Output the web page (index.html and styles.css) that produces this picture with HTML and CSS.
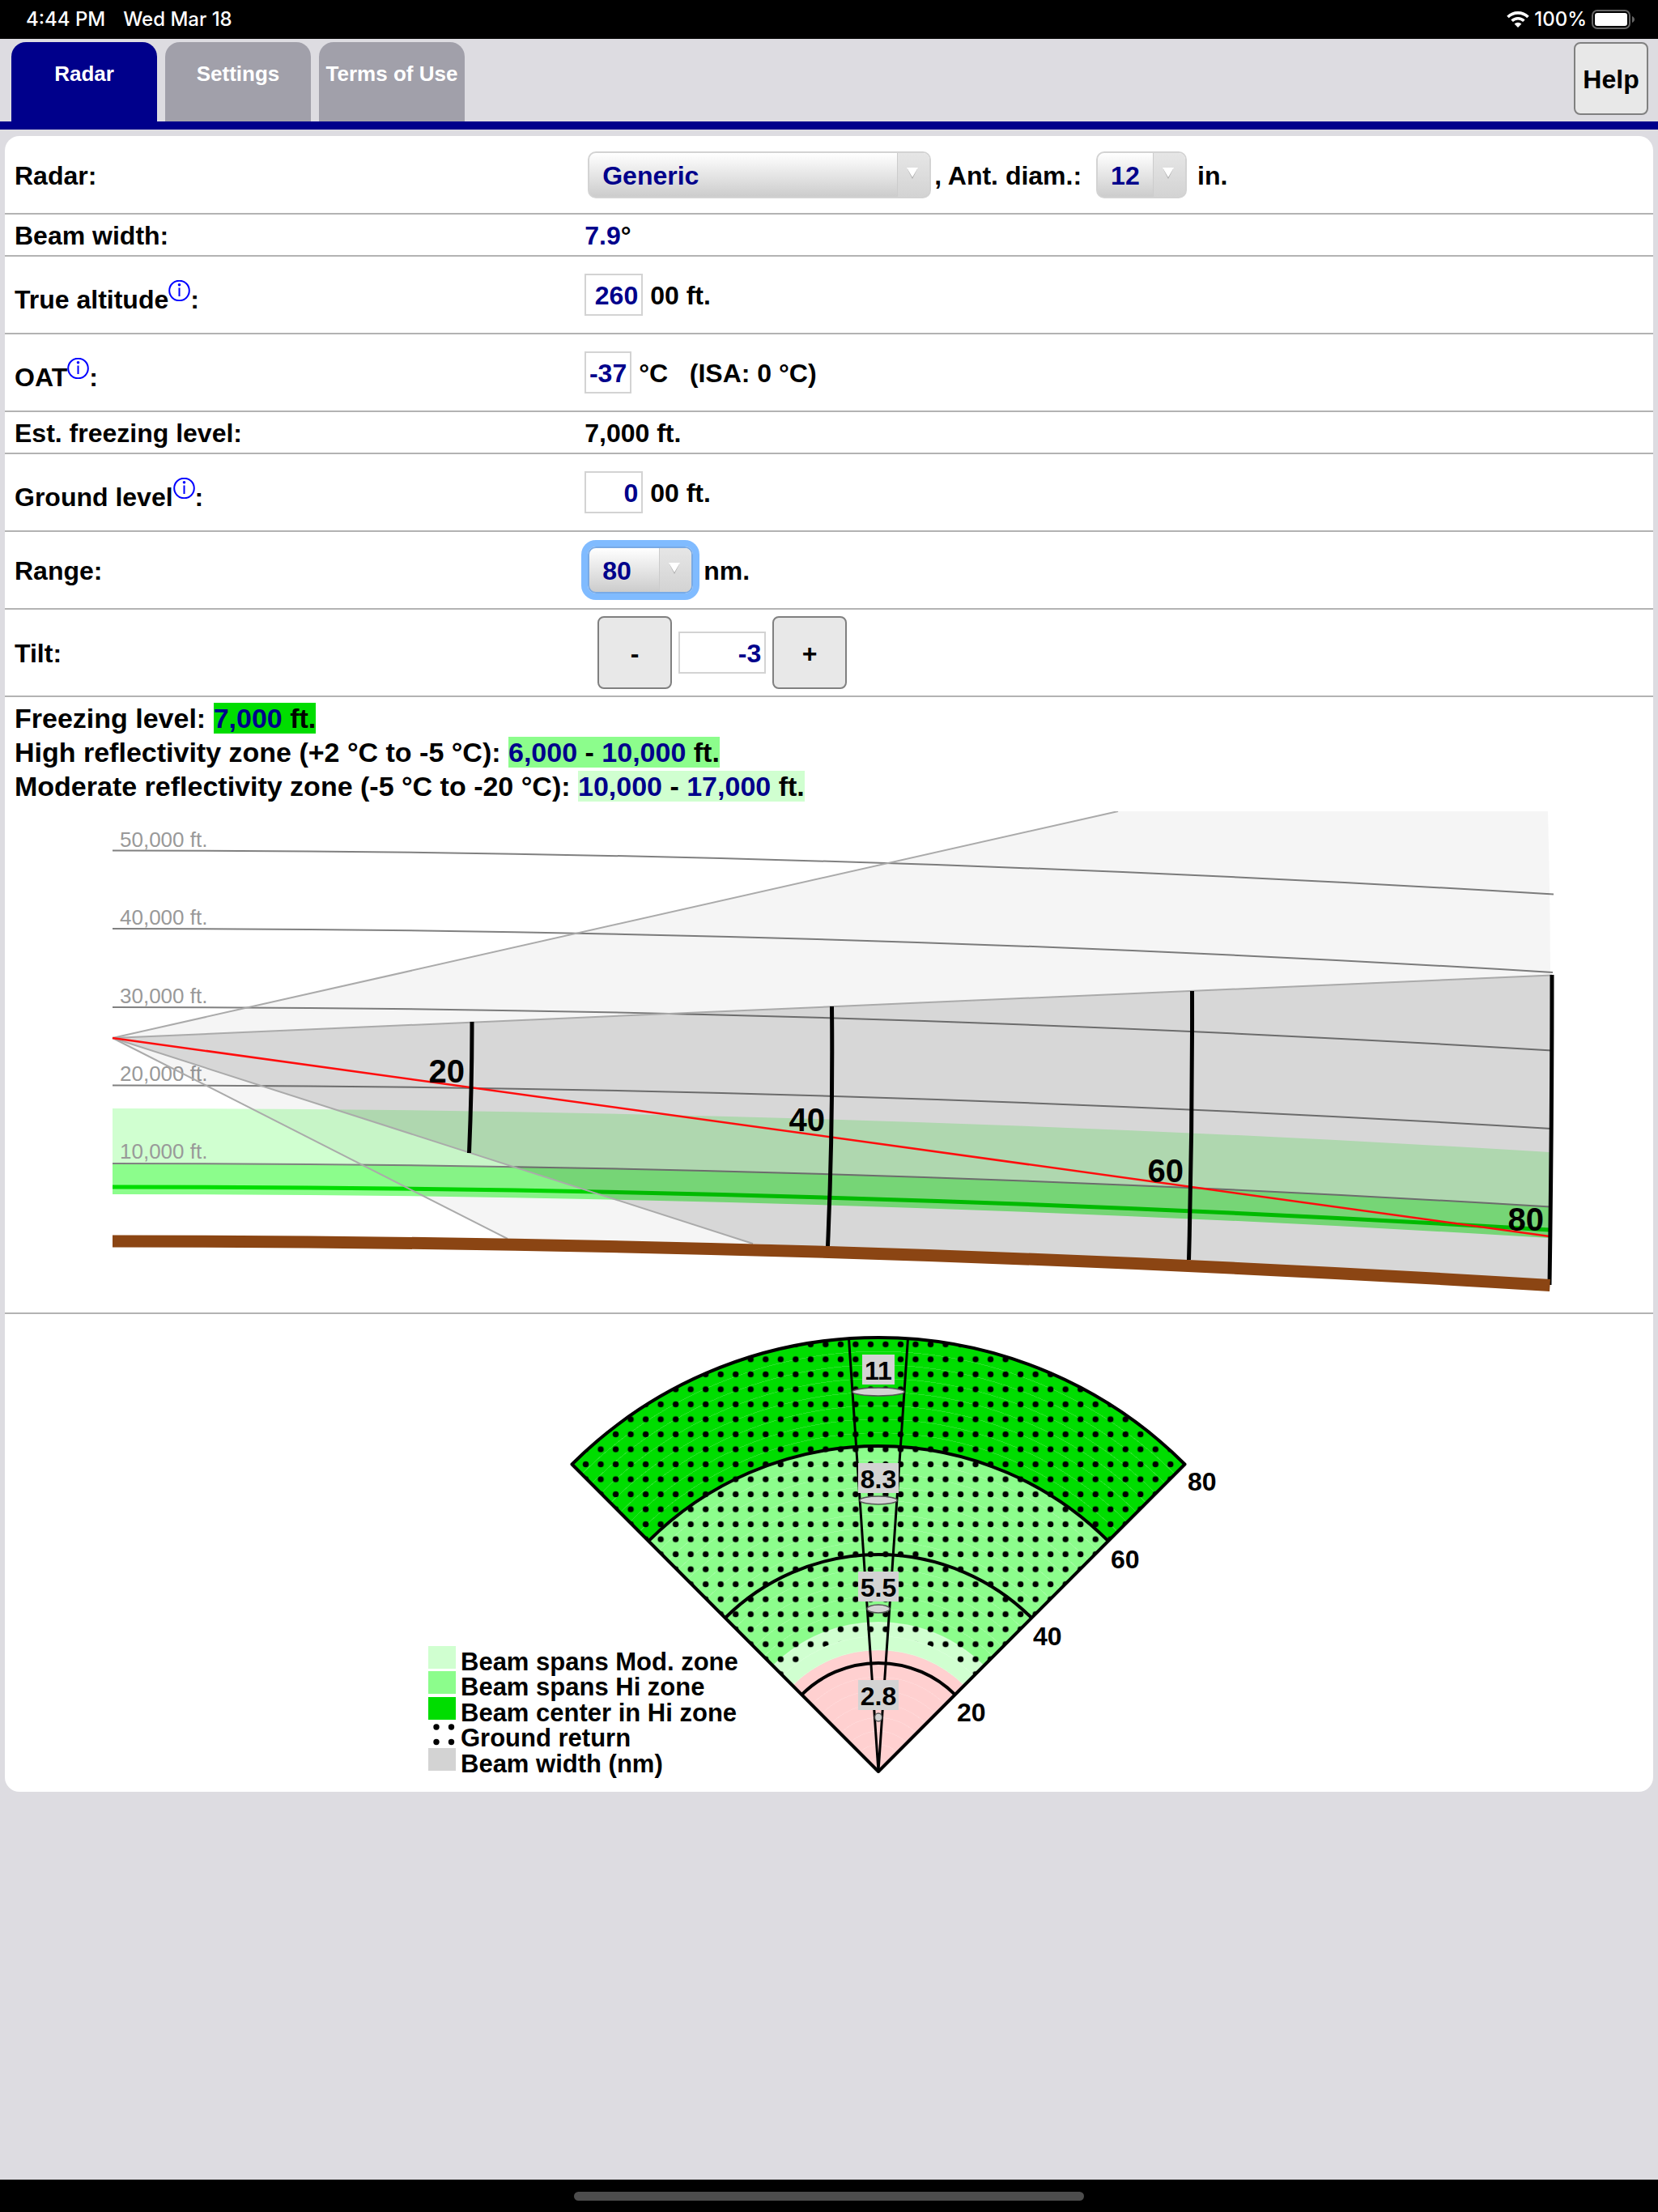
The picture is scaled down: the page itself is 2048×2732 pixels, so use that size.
FILE: index.html
```html
<!DOCTYPE html>
<html lang="en">
<head>
<meta charset="utf-8">
<meta name="viewport" content="width=device-width, initial-scale=1">
<title>Radar</title>
<link rel="stylesheet" href="styles.css">
</head>
<body>
<div class="statusbar">
  <span class="status-text">4:44 PM</span>
  <span class="status-text">Wed Mar 18</span>
  <span class="status-icons">
    <svg class="wifi" viewBox="0 0 28 20" aria-hidden="true">
      <path d="M14 20 L9.600 15.600 A6.200 6.200 0 0 1 18.400 15.600 Z" fill="#fff"/>
      <path d="M6.600 11.800 A10.500 10.500 0 0 1 21.400 11.800" fill="none" stroke="#fff" stroke-width="3.600"/>
      <path d="M1.500 7 A17.800 17.800 0 0 1 26.500 7" fill="none" stroke="#fff" stroke-width="3.600"/>
    </svg>
    <span class="status-text">100%</span>
    <svg class="battery" viewBox="0 0 54 24" aria-hidden="true">
      <rect x="1" y="1" width="46" height="22" rx="6" fill="none" stroke="#666" stroke-width="2"/>
      <rect x="4" y="4" width="40" height="16" rx="3" fill="#fff"/>
      <path d="M50 8 C54 9.500 54 14.500 50 16 Z" fill="#666"/>
    </svg>
  </span>
</div>

<header class="topbar">
  <nav class="tabs">
    <a class="tab tab-active" href="#radar">Radar</a>
    <a class="tab" href="#settings">Settings</a>
    <a class="tab" href="#terms">Terms of Use</a>
  </nav>
  <button class="btn" type="button">Help</button>
</header>

<main class="panel" id="radar">
  <form>
    <div class="row">
      <label for="model">Radar:</label>
      <div class="value">
        <span class="pick pick-wide">
          <select id="model"><option>Generic</option></select>
          <span class="arrow"><svg viewBox="0 0 14 14" aria-hidden="true"><path d="M1 2 L7 14 L13 2 Z" fill="#aaa"/><path d="M0 0 H14 L7 12 Z" fill="#fff"/></svg></span>
        </span>
        <label for="diam">, Ant. diam.:</label>
        <span class="pick pick-small pick-next">
          <select id="diam"><option>12</option></select>
          <span class="arrow"><svg viewBox="0 0 14 14" aria-hidden="true"><path d="M1 2 L7 14 L13 2 Z" fill="#aaa"/><path d="M0 0 H14 L7 12 Z" fill="#fff"/></svg></span>
        </span>
        <span class="unit">in.</span>
      </div>
    </div>
    <div class="row row-text">
      <span>Beam width:</span>
      <div class="value"><b class="num">7.9</b>°</div>
    </div>
    <div class="row row-mid">
      <span class="with-info"><label for="alt">True altitude</label><a class="info" href="#altitude-info" aria-label="About true altitude"><svg viewBox="0 0 27 26"><circle cx="13.500" cy="13" r="12.300"/><path d="M13.500 9.500 V20"/><circle class="dot" cx="13.500" cy="5.800" r="1.800"/></svg></a>:</span>
      <div class="value"><input class="field field-3" id="alt" type="text" value="260"><span class="unit">00 ft.</span></div>
    </div>
    <div class="row row-mid">
      <span class="with-info"><label for="oat">OAT</label><a class="info" href="#oat-info" aria-label="About OAT"><svg viewBox="0 0 27 26"><circle cx="13.500" cy="13" r="12.300"/><path d="M13.500 9.500 V20"/><circle class="dot" cx="13.500" cy="5.800" r="1.800"/></svg></a>:</span>
      <div class="value"><input class="field field-2" id="oat" type="text" value="-37"><span class="unit">°C &nbsp; (ISA: 0 °C)</span></div>
    </div>
    <div class="row row-text">
      <span>Est. freezing level:</span>
      <div class="value">7,000 ft.</div>
    </div>
    <div class="row row-mid">
      <span class="with-info"><label for="ground">Ground level</label><a class="info" href="#ground-info" aria-label="About ground level"><svg viewBox="0 0 27 26"><circle cx="13.500" cy="13" r="12.300"/><path d="M13.500 9.500 V20"/><circle class="dot" cx="13.500" cy="5.800" r="1.800"/></svg></a>:</span>
      <div class="value"><input class="field field-3" id="ground" type="text" value="0"><span class="unit">00 ft.</span></div>
    </div>
    <div class="row row-mid">
      <label for="range">Range:</label>
      <div class="value">
        <span class="pick pick-range">
          <select id="range"><option>80</option></select>
          <span class="arrow"><svg viewBox="0 0 14 14" aria-hidden="true"><path d="M1 2 L7 14 L13 2 Z" fill="#aaa"/><path d="M0 0 H14 L7 12 Z" fill="#fff"/></svg></span>
        </span>
        <span class="unit">nm.</span>
      </div>
    </div>
    <div class="row">
      <label for="tilt">Tilt:</label>
      <div class="value stepper">
        <button class="btn" type="button">-</button>
        <input class="field field-tilt" id="tilt" type="text" value="-3">
        <button class="btn" type="button">+</button>
      </div>
    </div>
  </form>

  <section class="profile">
    <p>Freezing level: <span class="hl hl-center"><b class="num">7,000</b> ft.</span></p>
    <p>High reflectivity zone (+2 °C to -5 °C): <span class="hl hl-high"><b class="num">6,000</b> - <b class="num">10,000</b> ft.</span></p>
    <p>Moderate reflectivity zone (-5 °C to -20 °C): <span class="hl hl-mod"><b class="num">10,000</b> - <b class="num">17,000</b> ft.</span></p>
    <svg class="chart" viewBox="6 1002 2036 619" role="img" aria-label="Beam side view">
      <!-- reflectivity zones -->
      <path fill="#d0ffd0" d="M139 1369 Q1027 1369 1914 1423 V1490 Q1027 1437 139 1437 Z"/>
      <path fill="#8cfd8c" d="M139 1437 Q1027 1437 1914 1490 V1529 Q1027 1475 139 1475 Z"/>
      <path fill="none" stroke="#00dd00" stroke-width="5" d="M139 1466 Q1027 1466 1914 1519"/>
      <!-- altitude lines -->
      <g fill="none" stroke="#808080" stroke-width="2">
        <path d="M139 1050.500 Q1028 1050.500 1919 1104.500"/>
        <path d="M139 1147 Q1028 1147 1918 1201"/>
        <path d="M139 1244 Q1028 1244 1917 1297.500"/>
        <path d="M139 1340.500 Q1028 1340.500 1916 1394"/>
        <path d="M139 1437 Q1028 1437 1915 1490.500"/>
      </g>
      <g class="alt-labels">
        <text x="148" y="1046">50,000 ft.</text>
        <text x="148" y="1142">40,000 ft.</text>
        <text x="148" y="1239">30,000 ft.</text>
        <text x="148" y="1335">20,000 ft.</text>
        <text x="148" y="1431">10,000 ft.</text>
      </g>
      <!-- side lobes, then the main beam -->
      <path fill="#000" fill-opacity=".04" d="M139 1282 L1381 1002 H1912 Q1915 1120 1915 1204 Z"/>
      <path fill="#000" fill-opacity=".04" d="M139 1282 L930 1536 L627 1530 Z"/>
      <path fill="#000" fill-opacity=".158" d="M139 1282 L1917 1204 L1914 1587 L930 1536 Z"/>
      <g fill="none" stroke="#aaa" stroke-width="2">
        <path d="M139 1282 L1381 1002"/>
        <path d="M139 1282 L1917 1204.500"/>
        <path d="M139 1282 L930 1536"/>
        <path d="M139 1282 L627 1530"/>
      </g>
      <path fill="none" stroke="#ff0d0d" stroke-width="2.500" d="M139 1282 L1914 1527"/>
      <!-- range marks -->
      <g fill="none" stroke="#000" stroke-width="5">
        <path d="M583 1262 Q583 1340 579.500 1424"/>
        <path d="M1027.500 1243 Q1029 1390 1022.500 1539"/>
        <path d="M1472.500 1224 Q1473 1390 1468.500 1556"/>
        <path d="M1917 1204 Q1917 1390 1914 1587"/>
      </g>
      <path fill="none" stroke="#8b4513" stroke-width="15" d="M139 1533 Q1027 1533 1914.500 1587.500"/>
      <g class="range-labels">
        <text x="574" y="1337">20</text>
        <text x="1019" y="1397">40</text>
        <text x="1462" y="1460">60</text>
        <text x="1907" y="1520">80</text>
      </g>
    </svg>
  </section>

  <section>
    <svg class="chart" viewBox="6 1623 2036 590" role="img" aria-label="Radar sweep">
      <defs>
        <pattern id="dots" patternUnits="userSpaceOnUse" x="1066.150" y="1651.100" width="18.520" height="18.520">
          <circle cx="9.260" cy="9.260" r="3.700"/>
        </pattern>
        <radialGradient id="rings" gradientUnits="userSpaceOnUse" cx="1085" cy="2188" r="16.750" spreadMethod="repeat">
          <stop offset=".94" stop-color="#fff" stop-opacity="0"/>
          <stop offset=".95" stop-color="#fff" stop-opacity=".18"/>
        </radialGradient>
      </defs>
      <path fill="#00dd00" d="M1085 2188 L706 1809 A536 536 0 0 1 1464 1809 Z"/>
      <path fill="#8cfd8c" d="M1085 2188 L800.700 1903.700 A402 402 0 0 1 1369.300 1903.700 Z"/>
      <path fill="#d0ffd0" d="M1085 2188 L954.200 2057.200 A185 185 0 0 1 1215.800 2057.200 Z"/>
      <path fill="#ffd0d0" d="M1085 2188 L979 2082 A150 150 0 0 1 1191 2082 Z"/>
      <path fill="url(#rings)" d="M1085 2188 L706 1809 A536 536 0 0 1 1464 1809 Z"/>
      <path fill="url(#dots)" d="M706 1809 A536 536 0 0 1 1464 1809 L1203.800 2069.200 A168 168 0 0 0 966.200 2069.200 Z"/>
      <g fill="none" stroke="#000" stroke-width="4" stroke-linejoin="round">
        <path d="M1085 2188 L706.500 1808.500 A536 536 0 0 1 1463.500 1808.500 Z"/>
        <path d="M800.700 1903.700 A402 402 0 0 1 1369.300 1903.700"/>
        <path d="M895.500 1998.500 A268 268 0 0 1 1274.500 1998.500"/>
        <path d="M990.200 2093.200 A134 134 0 0 1 1179.800 2093.200"/>
        <path stroke-width="3" d="M1048.500 1653 L1085 2188 L1121.500 1653"/>
      </g>
      <g fill="#d3d3d3" stroke="#555" stroke-width="1.500">
        <ellipse cx="1085" cy="1719" rx="32" ry="5"/>
        <ellipse cx="1085" cy="1853" rx="23" ry="5"/>
        <ellipse cx="1085" cy="1987" rx="14" ry="5"/>
        <ellipse cx="1085" cy="2121" rx="4.500" ry="5"/>
      </g>
      <g fill="#d3d3d3">
        <rect x="1065" y="1673" width="40" height="37"/>
        <rect x="1060" y="1807" width="50" height="37"/>
        <rect x="1060" y="1941" width="50" height="37"/>
        <rect x="1060" y="2075" width="50" height="37"/>
      </g>
      <g class="beam-labels">
        <text x="1085" y="1704">11</text>
        <text x="1085" y="1838">8.3</text>
        <text x="1085" y="1972">5.5</text>
        <text x="1085" y="2106">2.8</text>
      </g>
      <g>
        <text x="1467" y="1841">80</text>
        <text x="1372" y="1937">60</text>
        <text x="1276" y="2032">40</text>
        <text x="1182" y="2126">20</text>
      </g>
      <!-- legend -->
      <rect x="529" y="2033" width="34" height="28" fill="#d0ffd0"/>
      <rect x="529" y="2064" width="34" height="28" fill="#8cfd8c"/>
      <rect x="529" y="2096" width="34" height="28" fill="#00dd00"/>
      <g>
        <circle cx="539" cy="2133" r="3.700"/><circle cx="557.500" cy="2133" r="3.700"/>
        <circle cx="539" cy="2151.500" r="3.700"/><circle cx="557.500" cy="2151.500" r="3.700"/>
      </g>
      <rect x="529" y="2159" width="34" height="28" fill="#d3d3d3"/>
      <g class="legend">
        <text x="569" y="2063">Beam spans Mod. zone</text>
        <text x="569" y="2094">Beam spans Hi zone</text>
        <text x="569" y="2126">Beam center in Hi zone</text>
        <text x="569" y="2157">Ground return</text>
        <text x="569" y="2189">Beam width (nm)</text>
      </g>
    </svg>
  </section>
</main>

<footer class="homebar"><span class="home-indicator"></span></footer>
</body>
</html>
```
FILE: styles.css
```css
* {
  box-sizing: border-box;
}

body {
  margin: 0;
  min-height: 100vh;
  display: flex;
  flex-direction: column;
  background: #dddce1;
  color: #000;
  font: bold 32px/36px "Liberation Sans", Arial, sans-serif;
}

/* status bar */
.statusbar {
  display: flex;
  align-items: center;
  gap: 22px;
  height: 48px;
  padding: 0 28px 0 32px;
  background: #000;
  color: #fff;
}

.status-text {
  font: 500 24px/28px Inter, sans-serif;
}

.status-icons {
  display: flex;
  align-items: center;
  gap: 6px;
  margin-left: auto;
}

.wifi {
  width: 28px;
  height: 20px;
}

.battery {
  width: 54px;
  height: 24px;
}

/* tabs */
.topbar {
  display: flex;
  justify-content: space-between;
  height: 112px;
  padding: 4px 12px 0 14px;
  border-bottom: 10px solid #00008b;
}

.tabs {
  display: flex;
  gap: 10px;
}

.tab {
  width: 180px;
  padding-top: 24px;
  border-radius: 18px 18px 0 0;
  background: #a1a0aa;
  color: #fff;
  font-size: 26px;
  line-height: 30px;
  text-align: center;
  text-decoration: none;
  white-space: nowrap;
}

.tab-active {
  background: #00008b;
}

.btn {
  width: 92px;
  height: 90px;
  padding: 2px 0 0;
  border: 2px solid #808080;
  border-radius: 8px;
  background: #e8e8e8;
  color: #000;
  font: inherit;
}

/* settings rows */
.panel {
  margin: 8px 6px 0;
  border-radius: 18px;
  background: #fff;
  overflow: hidden;
}

.row {
  display: grid;
  grid-template-columns: 35% 1fr;
  align-items: center;
  padding: 7px 12px;
  border-bottom: 2px solid #b3b3b3;
}

.row:first-child {
  min-height: 97px;
}

.row:last-child {
  padding: 8px 12px;
}

.row-text {
  padding: 8px 12px 6px;
}

.row-mid {
  min-height: 96px;
}

.row label {
  padding-top: 2px;
}

.with-info {
  padding-top: 5px;
}

.value {
  display: flex;
  align-items: center;
}

.num,
.field,
.pick select {
  color: #00008b;
}

.unit {
  margin-left: 9px;
  padding-top: 2px;
}

.info svg {
  width: 27px;
  height: 26px;
  vertical-align: 9px;
  fill: none;
  stroke: #00f;
  stroke-width: 2;
}

.info .dot {
  fill: #00f;
  stroke: none;
}

.field {
  height: 52px;
  padding: 2px 4px 0;
  border: 2px solid #d3d3d3;
  border-radius: 0;
  background: #fff;
  font: inherit;
  text-align: right;
}

.field-2 {
  width: 58px;
  padding-left: 0;
}

.field-3 {
  width: 72px;
}

.field-tilt {
  width: 108px;
}

.stepper {
  gap: 8px;
  padding-left: 16px;
}

.pick {
  position: relative;
  height: 58px;
  margin: 0 4px;
}

.pick-wide {
  width: 424px;
}

.pick-small {
  width: 112px;
}

.pick-next {
  margin-left: 18px;
}

.pick-range {
  width: 130px;
}

.pick select {
  appearance: none;
  width: 100%;
  height: 100%;
  padding: 2px 16px 0;
  border: 2px solid #d3d3d3;
  border-radius: 10px;
  background: linear-gradient(#fff, #ccc);
  font: inherit;
}

.pick-range select {
  border-color: #78aae6;
  box-shadow: 0 0 0 8px #80bbff;
}

.arrow {
  position: absolute;
  inset: 2px 2px 2px auto;
  width: 40px;
  padding: 18px 0 0 11px;
  border-left: 1px solid #ccc;
  border-radius: 0 8px 8px 0;
  background: linear-gradient(#e6e6e6, #d3d3d3);
  line-height: 0;
  pointer-events: none;
}

.arrow svg {
  width: 14px;
  height: 14px;
}

/* beam profile */
.profile {
  padding-top: 5px;
  border-bottom: 2px solid #b3b3b3;
}

.profile p {
  margin: 0;
  padding: 0 12px;
  font-size: 34px;
  line-height: 42px;
}

.hl-center {
  background: #00dd00;
}

.hl-high {
  background: #8cfd8c;
}

.hl-mod {
  background: #d0ffd0;
}

.chart {
  display: block;
  width: 100%;
}

.profile .chart {
  margin-top: 10px;
}

.alt-labels {
  fill: #999;
  font-size: 26px;
  font-weight: normal;
}

.range-labels {
  font-size: 40px;
  text-anchor: end;
}

.beam-labels {
  text-anchor: middle;
}

.legend {
  font-size: 31px;
}

/* home bar */
.homebar {
  display: flex;
  align-items: center;
  justify-content: center;
  height: 40px;
  margin-top: auto;
  background: #000;
}

.home-indicator {
  width: 630px;
  height: 11px;
  border-radius: 6px;
  background: #4d4d4d;
}
```
